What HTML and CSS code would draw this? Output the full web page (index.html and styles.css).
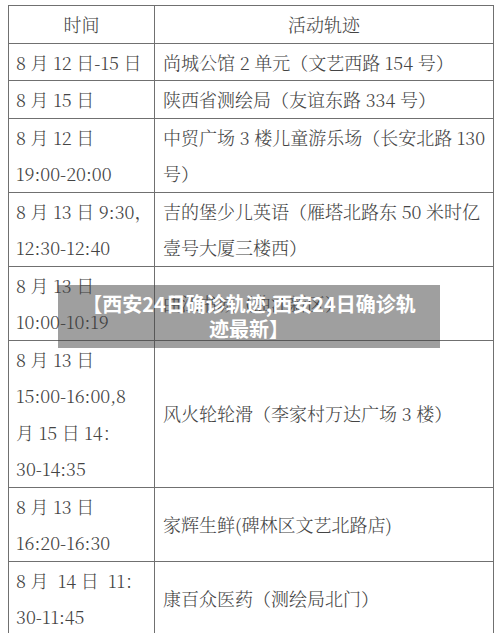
FILE: index.html
```html
<!DOCTYPE html>
<html lang="zh-CN">
<head>
<meta charset="utf-8">
<title>西安24日确诊轨迹</title>
<link rel="stylesheet" href="styles.css">
</head>
<body>
<div class="page">
  <table class="trace">
    <colgroup><col class="c-time"><col class="c-place"></colgroup>
    <thead>
      <tr class="h1"><th>时间</th><th>活动轨迹</th></tr>
    </thead>
    <tbody>
      <tr class="h1"><td>8 月 12 日-15 日</td><td>尚城公馆 2 单元（文艺西路 154 号）</td></tr>
      <tr class="h1"><td>8 月 15 日</td><td>陕西省测绘局（友谊东路 334 号）</td></tr>
      <tr class="h2"><td>8 月 12 日<br>19:00-20:00</td><td>中贸广场 3 楼儿童游乐场（长安北路 130<br>号）</td></tr>
      <tr class="h2"><td>8 月 13 日 9:30，<br>12:30-12:40</td><td>吉的堡少儿英语（雁塔北路东 50 米时亿<br>壹号大厦三楼西）</td></tr>
      <tr class="h2b"><td>8 月 13 日<br>10:00-10:19</td><td>曲江书城（曲江新区）</td></tr>
      <tr class="h4"><td>8 月 13 日<br>15:00-16:00,8<br>月 15 日 14：<br>30-14:35</td><td>风火轮轮滑（李家村万达广场 3 楼）</td></tr>
      <tr class="h2"><td>8 月 13 日<br>16:20-16:30</td><td>家辉生鲜(碑林区文艺北路店)</td></tr>
      <tr class="h2c"><td>8 月&nbsp; 14 日&nbsp; 11：<br>30-11:45</td><td>康百众医药（测绘局北门）</td></tr>
    </tbody>
  </table>
  <div class="banner">【西安24日确诊轨迹,西安24日确诊轨<br>迹最新】</div>
</div>
</body>
</html>
```

FILE: styles.css
```css
html, body {
  margin: 0;
  padding: 0;
  background: #ffffff;
}
.page {
  position: relative;
  width: 500px;
  height: 633px;
  padding: 5px 0 0 8px;
  box-sizing: border-box;
}
.trace {
  border-collapse: collapse;
  table-layout: fixed;
  width: 485px;
  font-family: "Noto Serif CJK SC", "Liberation Serif", "Noto Sans CJK SC", serif;
  font-size: 18px;
  color: #444444;
  font-weight: 300;
}
.c-time { width: 146px; }
.c-place { width: 339px; }
.trace th, .trace td {
  border: 1px solid #707070;
  padding: 0 0 0 8px;
  line-height: 36.5px;
  vertical-align: middle;
  white-space: nowrap;
  text-align: left;
  font-weight: 300;
}
.trace th {
  text-align: center;
  padding: 0;
}
.trace td:first-child { padding-left: 7px; }
.h1 { height: 37px; }
.h2 { height: 73px; }
.h2b { height: 74px; }
.h2c { height: 72px; }
.h4 { height: 146px; }
.banner {
  position: absolute;
  left: 58px;
  top: 285px;
  width: 382px;
  height: 63px;
  box-sizing: border-box;
  padding-top: 6px;
  background: rgba(64, 64, 64, 0.5);
  color: #ffffff;
  font-family: "Noto Sans CJK SC", "Liberation Sans", sans-serif;
  font-weight: 700;
  font-size: 20px;
  line-height: 25px;
  text-align: center;
}
```
